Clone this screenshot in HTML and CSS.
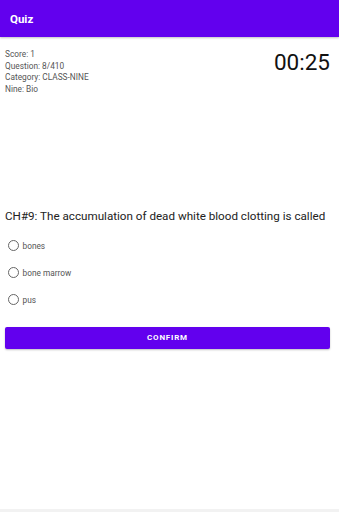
FILE: index.html
```html
<!DOCTYPE html>
<html lang="en">
<head>
    <meta charset="UTF-8">
    <meta name="viewport" content="width=device-width, initial-scale=1.0">
    <title>Quiz</title>
    <link rel="stylesheet" href="styles.css">
</head>
<body>
    <div class="app">
        <div class="toolbar">Quiz</div>

        <div class="content">
            <div class="top-row">
                <div class="info">
                    <div>Score: 1</div>
                    <div>Question: 8/410</div>
                    <div>Category: CLASS-NINE</div>
                    <div>Nine: Bio</div>
                </div>
                <div class="timer">00:25</div>
            </div>

            <p class="question">CH#9: The accumulation of dead white blood clotting is called</p>

            <div class="options">
                <label class="option"><span class="radio"></span>bones</label>
                <label class="option"><span class="radio"></span>bone marrow</label>
                <label class="option"><span class="radio"></span>pus</label>
            </div>

            <button class="confirm">CONFIRM</button>
        </div>

        <div class="navbar"></div>
    </div>
</body>
</html>
```

FILE: styles.css
```css
body {
    margin: 0;
    padding: 0;
    font-family: Roboto, "Noto Sans", sans-serif;
    background-color: #fff;
}

.app {
    height: 512px;
    display: flex;
    flex-direction: column;
}

.toolbar {
    height: 37px;
    background-color: #6200ee;
    color: #fff;
    font-size: 11.5px;
    font-weight: bold;
    padding-left: 10px;
    display: flex;
    align-items: center;
    box-shadow: 0 1px 2px rgba(0, 0, 0, 0.25);
}

.content {
    flex: 1;
    padding: 0 9px 0 5px;
}

.top-row {
    display: flex;
    justify-content: space-between;
    margin-top: 12px;
}

.info {
    font-size: 8.3px;
    line-height: 11.7px;
    color: #555;
}

.timer {
    font-size: 22.5px;
    color: #111;
}

.question {
    font-size: 11.65px;
    color: #222;
    margin: 113px 0 0 0;
    line-height: 14px;
    white-space: nowrap;
}

.options {
    margin-top: 17px;
    display: flex;
    flex-direction: column;
    gap: 15px;
}

.option {
    display: flex;
    align-items: center;
    height: 12px;
    font-size: 8.3px;
    color: #555;
}

.radio {
    width: 9px;
    height: 9px;
    border: 1.3px solid #666;
    border-radius: 50%;
    margin-left: 2.5px;
    margin-right: 4px;
}

.confirm {
    display: block;
    width: 100%;
    height: 22px;
    margin-top: 21px;
    background-color: #6200ee;
    color: #fff;
    border: 0;
    border-radius: 2px;
    font-family: Roboto, sans-serif;
    font-size: 8px;
    font-weight: bold;
    letter-spacing: 0.8px;
    box-shadow: 0 1px 2px rgba(0, 0, 0, 0.25);
}

.navbar {
    height: 3px;
    background-color: #f2f2f2;
}
```
